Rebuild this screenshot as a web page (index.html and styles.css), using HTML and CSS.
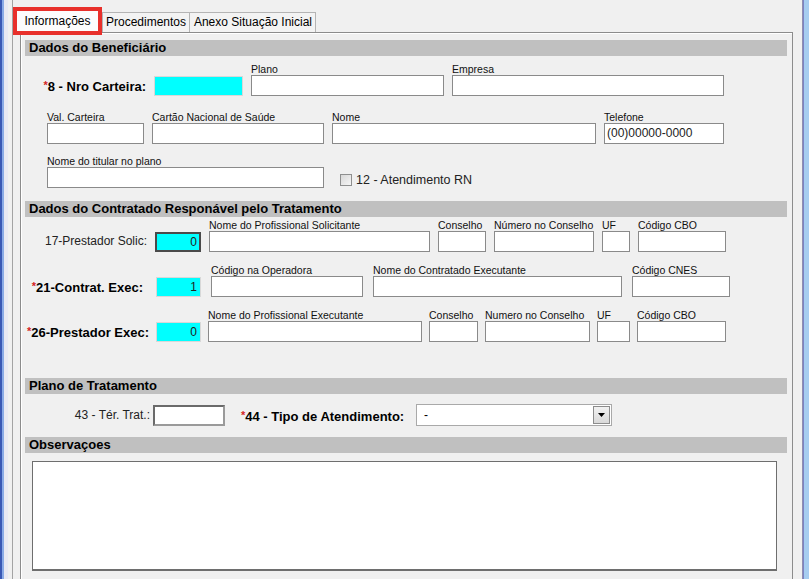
FILE: index.html
```html
<!DOCTYPE html>
<html lang="pt">
<head>
<meta charset="utf-8">
<title>Informações</title>
<link rel="stylesheet" href="styles.css">
</head>
<body>
<div class="screen">
  <div class="edge-l"></div>
  <div class="win">
    <div class="frame">
      <div class="tabs">
        <div class="tab active">Informações</div>
        <div class="tab t-proc">Procedimentos</div>
        <div class="tab t-anexo">Anexo Situação Inicial</div>
      </div>
      <div class="panel">
        <div class="sec-h">Dados do Beneficiário</div>
        <div class="row r1">
          <div class="lbl-b w121"><span class="req">*</span>8 - Nro Carteira:</div>
          <div class="cyan w89"></div>
          <div class="fld"><span class="cap">Plano</span><div class="box w193"></div></div>
          <div class="fld"><span class="cap">Empresa</span><div class="box w272"></div></div>
        </div>
        <div class="row r2">
          <div class="fld"><span class="cap">Val. Carteira</span><div class="box w97"></div></div>
          <div class="fld"><span class="cap">Cartão Nacional de Saúde</span><div class="box w172"></div></div>
          <div class="fld"><span class="cap">Nome</span><div class="box w264"></div></div>
          <div class="fld"><span class="cap">Telefone</span><div class="box w120 val">(00)00000-0000</div></div>
        </div>
        <div class="row r3">
          <div class="fld"><span class="cap">Nome do titular no plano</span><div class="box w277"></div></div>
          <div class="chk"><span class="cb"></span><span>12 - Atendimento RN</span></div>
        </div>

        <div class="sec-h s2">Dados do Contratado Responável pelo Tratamento</div>
        <div class="row ra">
          <div class="lbl w122">17-Prestador Solic:</div>
          <div class="cyan focus w46">0</div>
          <div class="fld"><span class="cap">Nome do Profissional Solicitante</span><div class="box w221"></div></div>
          <div class="fld"><span class="cap">Conselho</span><div class="box w48"></div></div>
          <div class="fld"><span class="cap">Número no Conselho</span><div class="box w100"></div></div>
          <div class="fld"><span class="cap">UF</span><div class="box w28"></div></div>
          <div class="fld"><span class="cap">Código CBO</span><div class="box w88"></div></div>
        </div>
        <div class="row rb">
          <div class="lbl-b w121 pr3"><span class="req">*</span>21-Contrat. Exec:</div>
          <div class="cyan w45">1</div>
          <div class="fld"><span class="cap">Código na Operadora</span><div class="box w152"></div></div>
          <div class="fld"><span class="cap">Nome do Contratado Executante</span><div class="box w249"></div></div>
          <div class="fld"><span class="cap">Código CNES</span><div class="box w98"></div></div>
        </div>
        <div class="row rc">
          <div class="lbl-b w124"><span class="req">*</span>26-Prestador Exec:</div>
          <div class="cyan w45">0</div>
          <div class="fld"><span class="cap">Nome do Profissional Executante</span><div class="box w214"></div></div>
          <div class="fld"><span class="cap">Conselho</span><div class="box w49"></div></div>
          <div class="fld"><span class="cap">Numero no Conselho</span><div class="box w105"></div></div>
          <div class="fld"><span class="cap">UF</span><div class="box w33"></div></div>
          <div class="fld"><span class="cap">Código CBO</span><div class="box w89"></div></div>
        </div>

        <div class="sec-h s3">Plano de Tratamento</div>
        <div class="row rd">
          <div class="lbl w125">43 - Tér. Trat.:</div>
          <div class="box dark w72"></div>
          <div class="lbl-b tipo"><span class="req">*</span>44 - Tipo de Atendimento:</div>
          <div class="select">
            <span class="sel-val">-</span>
            <span class="sel-btn"><svg width="7" height="4" viewBox="0 0 7 4"><path d="M0 0H7L3.5 4Z" fill="#000"/></svg></span>
          </div>
        </div>

        <div class="sec-h s4">Observaçoes</div>
        <div class="obs"></div>
      </div>
    </div>
  </div>
  <div class="edge-r"></div>
</div>
</body>
</html>
```

FILE: styles.css
```css
* { box-sizing: border-box; }
html, body {
  margin: 0;
  padding: 0;
  background: #f0f0f0;
  overflow: hidden;
}
body {
  font-family: "Liberation Sans", Arial, sans-serif;
  font-size: 12px;
  color: #000;
}
.screen {
  display: flex;
  width: 809px;
  height: 579px;
}
.edge-l {
  width: 4px;
  background: linear-gradient(to right, #3a58b4 0 2px, #8aaae6 2px 4px);
}
.edge-r {
  width: 6px;
  background: linear-gradient(to right, #7c82c4 0 1px, #a6cdf0 1px 6px);
}
.win {
  flex: 1;
  padding-left: 8px;
  background: linear-gradient(to right, #e8e8f2 0 4px, #f0f0f0 4px);
}
.frame {
  height: 100%;
  border-left: 1px solid #a3a3a3;
  border-right: 1px solid #8d8fb0;
  background: #f0f0f0;
}
.tabs {
  display: flex;
  align-items: flex-end;
  height: 32px;
}
.tab {
  height: 20px;
  line-height: 19px;
  border: 1px solid #b4b4b4;
  border-bottom: none;
  background: #f3f3f3;
  text-align: center;
  white-space: nowrap;
}
.tab.active {
  position: relative;
  z-index: 2;
  margin-left: 4px;
  margin-bottom: 1px;
  width: 81px;
  height: 20px;
  line-height: 20px;
  border: none;
  background: #fcfcfc;
  outline: 4px solid #e8302b;
}
.t-proc {
  margin-left: 4px;
  width: 88px;
}
.t-anexo {
  width: 126px;
  border-left: none;
  text-align: right;
  padding-right: 3px;
}
.panel {
  margin: 0 9px 0 7px;
  height: 560px;
  border: 1px solid #8c8c8c;
  box-shadow: inset 1px 1px 0 #ffffff;
  padding: 7px 5px 0 4px;
  background: #f0f0f0;
}
.sec-h {
  height: 16px;
  line-height: 16px;
  padding-left: 4px;
  background: #c0c0c0;
  font-weight: bold;
  font-size: 13px;
  white-space: nowrap;
}
.s2 { margin-top: 13px; }
.s3 { margin-top: 36px; }
.s4 { margin-top: 11px; }

.row {
  display: flex;
  align-items: flex-end;
  gap: 8px;
}
.r1 { margin-top: 8px; }
.r2 { margin-top: 16px; padding-left: 22px; }
.r3 { margin-top: 12px; padding-left: 22px; }
.ra { margin-top: 3px; }
.rb { margin-top: 13px; gap: 10px; }
.rc { margin-top: 13px; gap: 7px; }
.rd { margin-top: 10px; gap: 3px; }

.fld {
  display: flex;
  flex-direction: column;
}
.cap {
  display: block;
  height: 11px;
  line-height: 11px;
  font-size: 10.5px;
  white-space: nowrap;
  color: #111;
}
.box {
  height: 21px;
  border: 1px solid #8a8a8a;
  background: #fff;
}
.box.val {
  font-size: 12px;
  line-height: 19px;
  padding-left: 2px;
  color: #222;
}
.box.dark {
  border: 2px solid #6a6a6a;
  border-right-color: #9a9a9a;
  border-bottom-color: #9a9a9a;
}
.lbl, .lbl-b {
  height: 21px;
  line-height: 21px;
  text-align: right;
  white-space: nowrap;
}
.lbl { font-size: 12px; color: #222; }
.lbl-b { font-size: 13px; font-weight: bold; }
.pr3 { padding-right: 3px; }
.req {
  color: #d42424;
  font-weight: bold;
  font-size: 11px;
  vertical-align: 2px;
}
.cyan {
  height: 20px;
  background: #00ffff;
  border: 1px solid #d8d8d8;
  text-align: right;
  padding-right: 3px;
  line-height: 18px;
  font-size: 12px;
  color: #222;
}
.cyan.focus {
  border: 2px solid #4a4a4a;
  line-height: 16px;
  padding-right: 2px;
}
.chk {
  display: flex;
  align-items: center;
  margin-left: 8px;
  margin-bottom: 1px;
  gap: 4px;
  font-size: 12.5px;
  color: #222;
  height: 14px;
}
.cb {
  display: block;
  width: 12px;
  height: 12px;
  border: 1px solid #8e8f8f;
  background: linear-gradient(135deg, #d8d8d8, #f6f6f6);
}
.tipo {
  width: 169px;
  margin-left: 13px;
  text-align: left;
}
.select {
  display: flex;
  align-items: center;
  justify-content: space-between;
  width: 196px;
  height: 22px;
  margin-left: 3px;
  border: 1px solid #a9a9a9;
  background: #fff;
  padding: 0 1px 0 7px;
}
.sel-val { font-size: 12px; }
.sel-btn {
  display: flex;
  align-items: center;
  justify-content: center;
  width: 17px;
  height: 18px;
  border: 1px solid #8c8c8c;
  background: linear-gradient(#f2f2f2, #d9d9d9);
}
.obs {
  margin: 8px 0 0 7px;
  width: 745px;
  height: 110px;
  border: 1px solid #6e6e6e;
  border-bottom-width: 2px;
  background: #fff;
}

.w28 { width: 28px; } .w33 { width: 33px; }
.w45 { width: 45px; } .w46 { width: 46px; }
.w48 { width: 48px; } .w49 { width: 49px; }
.w72 { width: 72px; } .w88 { width: 88px; }
.w89 { width: 89px; } .w97 { width: 97px; }
.w98 { width: 98px; } .w100 { width: 100px; }
.w105 { width: 105px; } .w120 { width: 120px; }
.w121 { width: 121px; } .w122 { width: 122px; }
.w124 { width: 124px; } .w125 { width: 125px; }
.w152 { width: 152px; } .w172 { width: 172px; }
.w193 { width: 193px; } .w214 { width: 214px; }
.w221 { width: 221px; } .w249 { width: 249px; }
.w264 { width: 264px; } .w272 { width: 272px; }
.w277 { width: 277px; }
```
